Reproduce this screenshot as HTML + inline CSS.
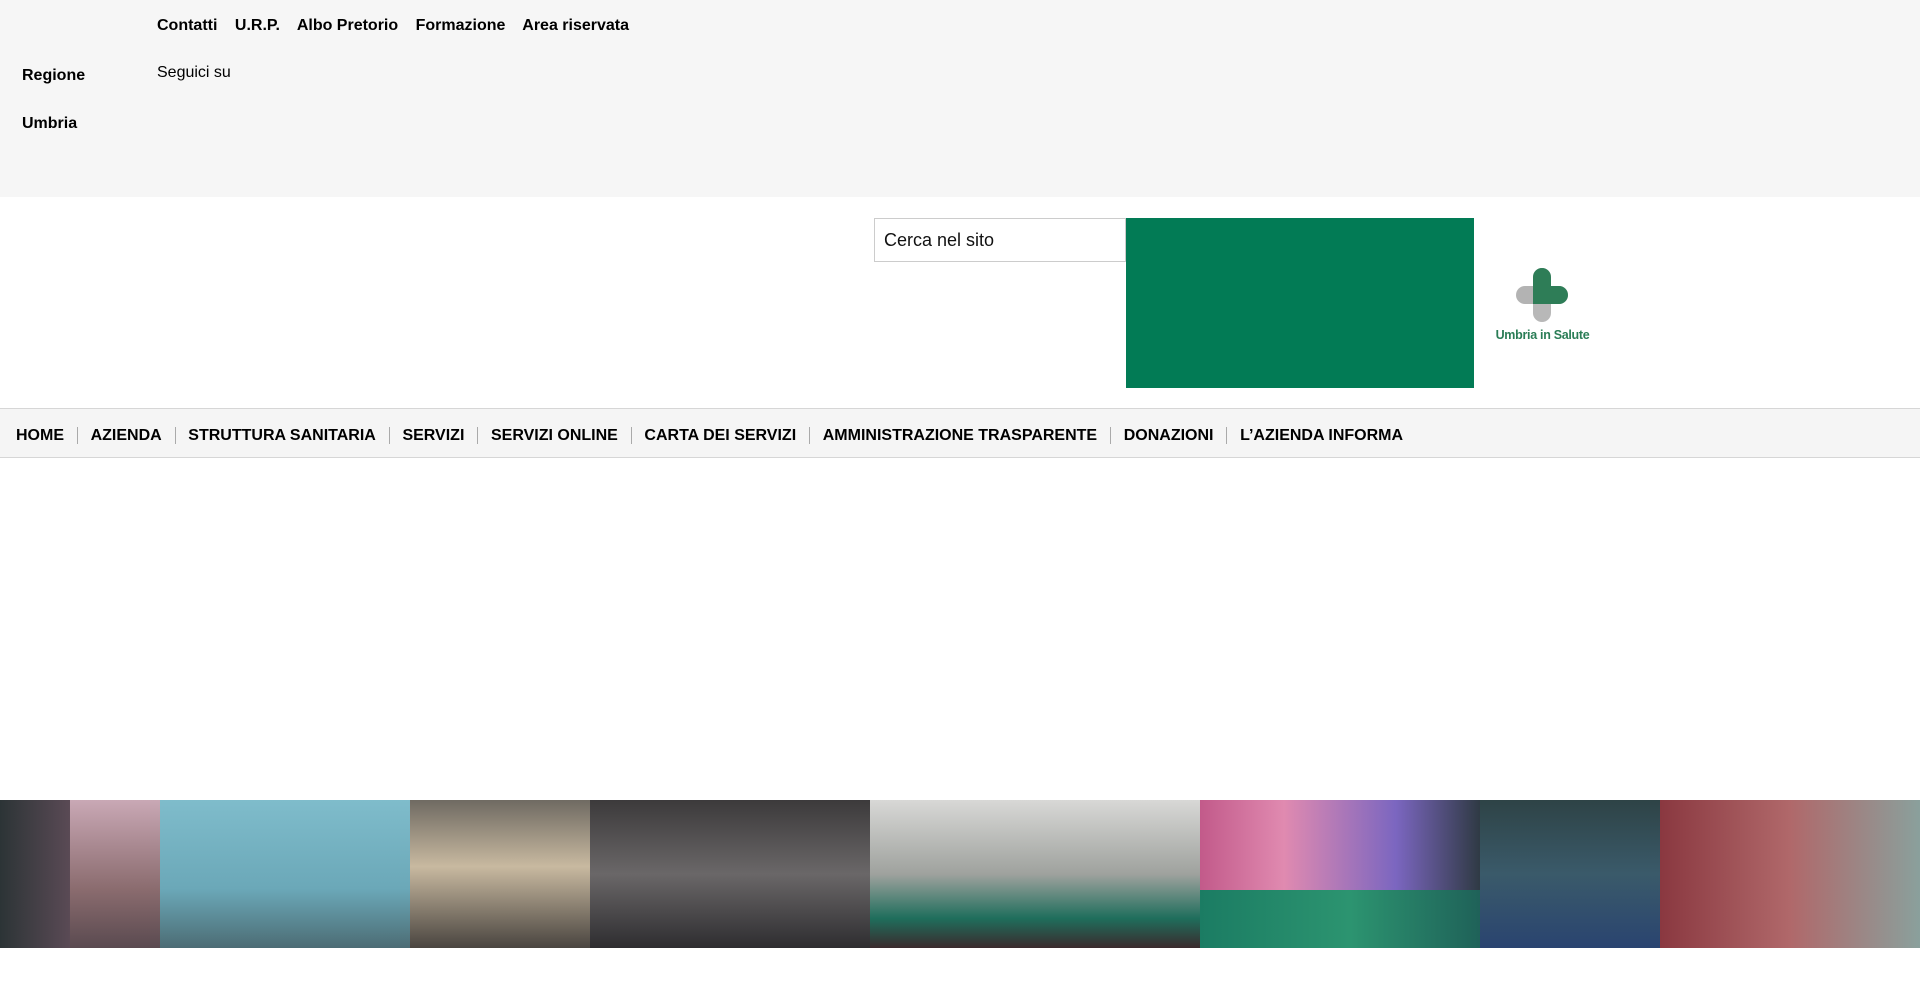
<!DOCTYPE html>
<html><head><meta charset="utf-8"><style>
*{margin:0;padding:0;box-sizing:border-box}
body{width:1920px;height:993px;background:#fff;font-family:"Liberation Sans",Arial,sans-serif;color:#000;position:relative;overflow:hidden}
.top{position:absolute;left:0;top:0;width:1920px;height:197px;background:#f6f6f6}
.links{position:absolute;left:157px;top:17px;font-weight:bold;font-size:16px}
.links span{margin-right:13px}
.reg{position:absolute;left:22px;font-weight:bold;font-size:16px}
.seg{position:absolute;left:157px;top:64px;font-size:16px}
.search{position:absolute;left:874px;top:218px;width:252px;height:44px;border:1px solid #ccc;background:#fff;font-size:18px;padding:11px 9px;color:#111}
.green{position:absolute;left:1126px;top:218px;width:348px;height:170px;background:#027b55}
.logo{position:absolute;left:1490px;top:266px;width:105px;height:80px}
.logo .t{position:absolute;top:62px;left:0;width:105px;text-align:center;font-size:12.5px;font-weight:bold;color:#2a7d56;letter-spacing:-0.3px}
.nav{position:absolute;left:0;top:408px;width:1920px;height:50px;background:#f5f5f5;border-top:1px solid #d6d6d6;border-bottom:1px solid #d6d6d6;display:flex;align-items:center;padding-left:16px;padding-top:4px;font-weight:bold;font-size:16px}
.nav span{padding:0 12.8px;border-left:1px solid #aaa;line-height:17px}
.nav span:first-child{padding-left:0;border-left:none}
.img{position:absolute;left:0;top:800px;width:1920px;height:148px;overflow:hidden;background:#555}
.img div{position:absolute;top:0;height:148px}
</style></head><body>
<div class="top">
<div class="links"><span>Contatti</span> <span>U.R.P.</span> <span>Albo Pretorio</span> <span>Formazione</span> <span>Area riservata</span></div>
<div class="reg" style="top:67px">Regione</div>
<div class="reg" style="top:115px">Umbria</div>
<div class="seg">Seguici su</div>
</div>
<div class="search">Cerca nel sito</div>
<div class="green"></div>
<div class="logo">
<svg width="105" height="62" viewBox="0 0 105 62">
<rect x="26" y="20" width="52" height="18" rx="9" fill="#b3b3b3"/>
<rect x="43" y="2" width="18" height="54" rx="9" fill="#b8b8b8"/>
<path d="M52 2a9 9 0 0 1 9 9v9h8a9 9 0 0 1 0 18H43V11a9 9 0 0 1 9-9z" fill="#2e7d57"/>
</svg>
<div class="t">Umbria in Salute</div>
</div>
<div class="nav"><span>HOME</span><span>AZIENDA</span><span>STRUTTURA SANITARIA</span><span>SERVIZI</span><span>SERVIZI ONLINE</span><span>CARTA DEI SERVIZI</span><span>AMMINISTRAZIONE TRASPARENTE</span><span>DONAZIONI</span><span>L’AZIENDA INFORMA</span></div>
<div class="img">
<div style="left:0;width:70px;background:linear-gradient(90deg,#2c3436,#5a4a55)"></div>
<div style="left:70px;width:90px;background:linear-gradient(180deg,#c9a8b5,#8b6c6f 60%,#5a4a50)"></div>
<div style="left:160px;width:250px;background:linear-gradient(180deg,#7fbccb,#6ba8b8 60%,#4c6c74)"></div>
<div style="left:410px;width:180px;background:linear-gradient(180deg,#6f6a62,#c8b9a0 45%,#4a4540)"></div>
<div style="left:590px;width:280px;background:linear-gradient(180deg,#3c3a3b,#6a6768 50%,#2e2d30)"></div>
<div style="left:870px;width:330px;background:linear-gradient(180deg,#d8d8d6,#9fa29e 50%,#1f6e5c 80%,#3a2a2d)"></div>
<div style="left:1200px;width:280px;background:linear-gradient(90deg,#c25a8a,#e08ab0 30%,#7b66c0 70%,#2f3a44)"></div>
<div style="left:1200px;top:90px;width:300px;height:58px;background:linear-gradient(90deg,#1b7c63,#2c9470 50%,#1d5a55)"></div>
<div style="left:1480px;width:180px;background:linear-gradient(180deg,#2e4346,#3a5a6a 50%,#2a4470)"></div>
<div style="left:1660px;width:260px;background:linear-gradient(90deg,#8a3840,#b0686a 50%,#8aa09c)"></div>
</div>
</body></html>
